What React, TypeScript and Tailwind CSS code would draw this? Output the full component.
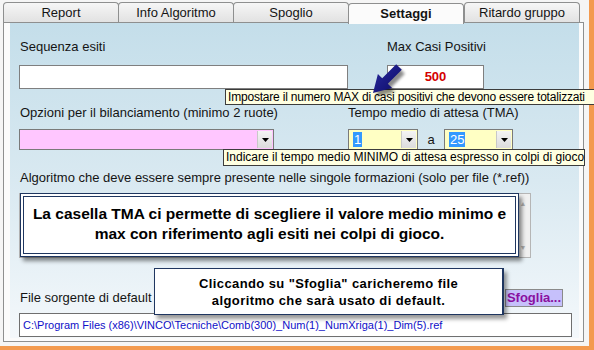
import React from "react";

const tabs = ["Report", "Info Algoritmo", "Spoglio", "Settaggi", "Ritardo gruppo"];

function DropButton() {
  return (
    <div className="w-[15px] h-full flex items-center justify-center bg-gradient-to-b from-[#f4f4f4] to-[#dcdcdc] border-l border-[#c8c8c8]">
      <svg width="7" height="4" viewBox="0 0 7 4">
        <path d="M0 0 L7 0 L3.5 4 Z" fill="#000" />
      </svg>
    </div>
  );
}

function Combo({ w, bg, value }: { w: string; bg: string; value?: string }) {
  return (
    <div className={`${w} ${bg} h-[21px] flex border border-[#7a7a7a] p-[1px]`}>
      <div className="flex-1 flex items-center pl-[3px]">
        {value && (
          <span className="bg-[#3399ff] text-white text-[13px] leading-[15px] px-[1px]">{value}</span>
        )}
      </div>
      <DropButton />
    </div>
  );
}

export default function App() {
  return (
    <div className="relative w-[594px] h-[350px] overflow-hidden bg-[#f39a4f] font-['Liberation_Sans',Arial,sans-serif] text-[#141414]">
      <div className="w-[589px] h-[346px] bg-[#f5f5f5] pt-[2px]">
        {/* Tabs */}
        <div className="flex pl-[3px] h-[20px]">
          {tabs.map((t) => {
            const active = t === "Settaggi";
            return (
              <div
                key={t}
                className={
                  active
                    ? "relative z-10 w-[116px] h-[21px] mt-[1px] flex items-center justify-center border border-b-0 border-[#8e8f8f] rounded-t-[4px] bg-[#fbfbfb] text-[13px] font-bold"
                    : "w-[116px] h-[20px] flex items-center justify-center border border-b-0 border-[#8e8f8f] rounded-t-[4px] bg-gradient-to-b from-[#f6f6f6] to-[#e2e2e2] text-[13px] -mr-px last:mr-0"
                }
              >
                {t}
              </div>
            );
          })}
        </div>

        {/* Panel */}
        <div className="ml-[3px] w-[581px] h-[320px] border border-[#8e8f8f] bg-[#fbfbfb] pl-[6px] pr-[4px] pb-[3px]">
          <div className="w-[569px] h-[315px] bg-gradient-to-b from-[#c4deea] via-[#d9e9f1] to-[#f4f8fb] px-[9px] pt-[16px] text-[13px]">
            <div className="flex h-[15px] leading-[15px]">
              <div className="w-[368px] pl-[1px]">Sequenza esiti</div>
              <div>Max Casi Positivi</div>
            </div>

            <div className="flex mt-[11px]">
              <div className="w-[329px] h-[24px] bg-white border border-[#7f7f7f]" />
              <div className="ml-[39px] w-[97px] h-[24px] bg-white border border-[#7f7f7f] flex items-center justify-center text-[#d40000] font-bold text-[13px]">
                500
              </div>
            </div>

            <div className="flex h-[15px] leading-[15px] mt-[16px]">
              <div className="w-[329px] pl-[1px]">Opzioni per il bilanciamento (minimo 2 ruote)</div>
              <div>Tempo medio di attesa (TMA)</div>
            </div>

            <div className="flex items-center mt-[9px]">
              <Combo w="w-[255px]" bg="bg-[#ffc6ff]" />
              <div className="ml-[74px]">
                <Combo w="w-[70px]" bg="bg-[#ffffc4]" value="1" />
              </div>
              <div className="w-[26px] text-center">a</div>
              <Combo w="w-[69px]" bg="bg-[#ffffc4]" value="25" />
            </div>

            <div className="h-[15px] leading-[15px] mt-[20px] pl-[1px]">
              Algoritmo che deve essere sempre presente nelle singole formazioni (solo per file (*.ref))
            </div>

            <div className="mt-[8px] w-[512px] h-[65px] bg-white border border-[#b5b5b5] flex justify-end">
              <div className="w-[14px] h-full bg-[#f0f0f0] flex flex-col items-center justify-between py-[6px] text-[7px] text-[#b0b0b0] leading-none">
                <span>▲</span>
                <span>▼</span>
              </div>
            </div>

            <div className="flex items-center h-[18px] mt-[31px]">
              <div className="pl-[1px] flex-1">File sorgente di default</div>
              <div className="mr-[7px] w-[58px] h-[18px] bg-[#c6c0fb] border border-[#8a8a8a] flex items-center justify-center text-[#8a0fa0] font-bold text-[13px]">
                Sfoglia...
              </div>
            </div>

            <div className="mt-[6px] w-[553px] h-[24px] bg-white border border-[#6f6f6f] flex items-center pl-[3px] text-[11px] text-[#1010c8]">
              C:\Program Files (x86)\VINCO\Tecniche\Comb(300)_Num(1)_NumXriga(1)_Dim(5).ref
            </div>
          </div>
        </div>
      </div>

      {/* Tooltip 1 */}
      <div className="absolute left-[225px] top-[89px] h-[16px] w-[380px] bg-[#ffffe1] border border-[#3c3c3c] pl-[2px] text-[12px] tracking-[-0.2px] leading-[14px] text-black whitespace-nowrap">
        Impostare il numero MAX di casi positivi che devono essere totalizzati
      </div>

      {/* Tooltip 2 */}
      <div className="absolute left-[223px] top-[149px] h-[17px] w-[362px] bg-[#ffffe1] border border-[#3c3c3c] pl-[2px] text-[12px] leading-[15px] text-black whitespace-nowrap">
        Indicare il tempo medio MINIMO di attesa espresso in colpi di gioco
      </div>

      {/* Arrow */}
      <svg className="absolute left-[360px] top-[58px]" width="56" height="48" viewBox="0 0 56 48">
        <defs>
          <filter id="sh" x="-30%" y="-30%" width="160%" height="160%">
            <feGaussianBlur stdDeviation="1.6" />
          </filter>
          <linearGradient id="ag" x1="0" y1="0" x2="1" y2="1">
            <stop offset="0" stopColor="#2a2aa0" />
            <stop offset="1" stopColor="#0c0c66" />
          </linearGradient>
        </defs>
        <polygon
          points="41.8,11.8 27.8,25.8 32.1,30.1 13,35 17.9,15.9 22.2,20.2 36.2,6.2"
          fill="#000"
          opacity="0.45"
          filter="url(#sh)"
          transform="translate(3,4)"
        />
        <polygon
          points="41.8,11.8 27.8,25.8 32.1,30.1 13,35 17.9,15.9 22.2,20.2 36.2,6.2"
          fill="url(#ag)"
        />
      </svg>

      {/* Callout 1 */}
      <div className="absolute left-[20px] top-[193px] w-[499px] h-[64px] bg-white border border-[#1f3660] p-[2px] shadow-[3px_4px_4px_rgba(0,0,0,0.45)]">
        <div className="w-full h-full border border-[#1f3660] flex flex-col items-center justify-center pb-[3px] text-[15.5px] leading-[20px] font-bold text-black">
          <div>La casella TMA ci permette di scegliere il valore medio minimo e</div>
          <div>max con riferimento agli esiti nei colpi di gioco.</div>
        </div>
      </div>

      {/* Callout 2 */}
      <div className="absolute left-[154px] top-[268px] w-[350px] h-[47px] bg-white border border-r-2 border-[#1f3660] flex flex-col items-center justify-center text-[13px] leading-[17px] font-bold tracking-[0.4px] text-black shadow-[3px_4px_4px_rgba(0,0,0,0.4)]">
        <div>Cliccando su &quot;Sfoglia&quot; caricheremo file</div>
        <div>algoritmo che sarà usato di default.</div>
      </div>
    </div>
  );
}
